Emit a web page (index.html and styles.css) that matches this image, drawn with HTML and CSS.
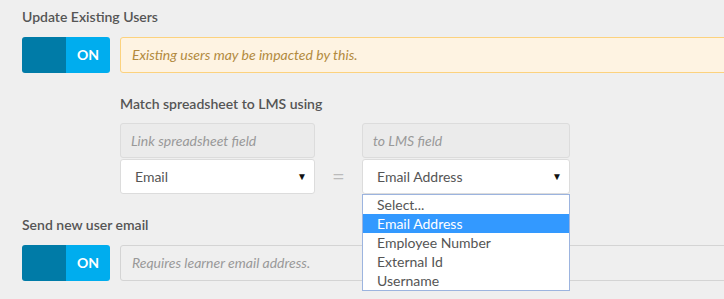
FILE: index.html
```html
<!DOCTYPE html>
<html lang="en">
<head>
    <meta charset="UTF-8">
    <title>User Import Settings</title>
    <link rel="stylesheet" href="styles.css">
</head>
<body>

<div class="page">
    <h3 class="section-title">Update Existing Users</h3>
    <div class="option-row">
        <div class="toggle"><span class="toggle-knob"></span><span class="toggle-label">ON</span></div>
        <div class="notice notice-warning">Existing users may be impacted by this.</div>
    </div>

    <div class="match">
        <h4 class="match-title">Match spreadsheet to LMS using</h4>
        <div class="match-grid">
            <div class="field-col field-left">
                <div class="field field-disabled">Link spreadsheet field</div>
                <div class="field field-select">Email<span class="caret">&#9660;</span></div>
            </div>
            <div class="equals">=</div>
            <div class="field-col field-right">
                <div class="field field-disabled">to LMS field</div>
                <div class="field field-select">Email Address<span class="caret">&#9660;</span></div>
                <ul class="dropdown">
                    <li>Select...</li>
                    <li class="active">Email Address</li>
                    <li>Employee Number</li>
                    <li>External Id</li>
                    <li>Username</li>
                </ul>
            </div>
        </div>
    </div>

    <h3 class="section-title section-second">Send new user email</h3>
    <div class="option-row">
        <div class="toggle"><span class="toggle-knob"></span><span class="toggle-label">ON</span></div>
        <div class="notice notice-plain">Requires learner email address.</div>
    </div>
</div>

</body>
</html>
```

FILE: styles.css
```css
html {
    overflow: hidden;
}

body {
    margin: 0;
    padding: 0;
    background-color: #efefef;
    font-family: Lato, "Open Sans", sans-serif;
    font-size: 14px;
    color: #555;
}

.page {
    padding: 0 22px 14px;
}

.section-title {
    margin: 7px 0 0;
    font-size: 14px;
    line-height: 20px;
    font-weight: 600;
    color: #555;
}

.section-second {
    margin-top: 21px;
}

.option-row {
    display: flex;
    gap: 10px;
    margin-top: 10px;
    height: 36px;
}

.toggle {
    display: flex;
    width: 88px;
    flex: none;
    border-radius: 3px;
    overflow: hidden;
}

.toggle-knob {
    width: 44px;
    background-color: #007ba7;
}

.toggle-label {
    width: 44px;
    background-color: #00adee;
    color: #fff;
    font-weight: 700;
    text-align: center;
    line-height: 36px;
}

.notice {
    flex: none;
    width: 640px;
    box-sizing: border-box;
    padding: 0 11px;
    line-height: 34px;
    font-style: italic;
    border-radius: 3px;
}

.notice-warning {
    background-color: #fef3e2;
    border: 1px solid #fcd27e;
    color: #b28a3e;
}

.notice-plain {
    background-color: #efefef;
    border: 1px solid #d4d4d4;
    color: #999;
}

.match {
    margin-left: 98px;
    margin-top: 21px;
}

.match-title {
    margin: 0;
    font-size: 14px;
    line-height: 20px;
    font-weight: 600;
    color: #555;
}

.match-grid {
    display: flex;
    margin-top: 9px;
}

.field-col {
    display: flex;
    flex-direction: column;
    gap: 1px;
    position: relative;
}

.field-left {
    width: 195px;
}

.field-right {
    width: 208px;
}

.equals {
    width: 47px;
    text-align: center;
    padding-top: 43px;
    color: #bbb;
    font-size: 22px;
    line-height: 20px;
}

.field {
    height: 35px;
    box-sizing: border-box;
    padding: 0 10px;
    line-height: 33px;
    border: 1px solid #dcdcdc;
    border-radius: 3px;
}

.field-disabled {
    background-color: #ebebeb;
    color: #999;
    font-style: italic;
}

.field-select {
    background-color: #fff;
    color: #555;
    padding: 0 7px 0 14px;
    display: flex;
    justify-content: space-between;
}

.caret {
    color: #111;
    font-size: 10px;
}

.dropdown {
    position: absolute;
    top: 71px;
    left: 0;
    z-index: 5;
    width: 208px;
    box-sizing: border-box;
    margin: 0;
    padding: 0;
    list-style: none;
    background-color: #fff;
    border: 1px solid #9cb4df;
}

.dropdown li {
    height: 19px;
    line-height: 19px;
    padding-left: 14px;
    color: #555;
}

.dropdown li.active {
    background-color: #3399ff;
    color: #fff;
}
```
